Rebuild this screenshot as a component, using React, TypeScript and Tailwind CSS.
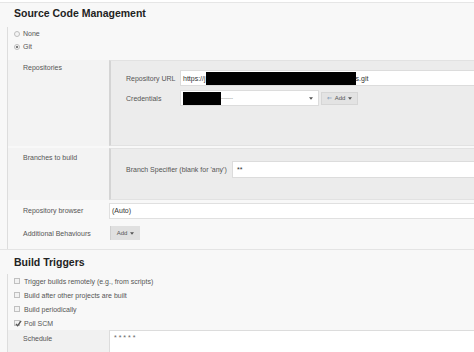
import React from "react";

function Radio({ checked }: { checked?: boolean }) {
  return (
    <span className="flex h-[6px] w-[6px] shrink-0 items-center justify-center rounded-full border border-[#bdbdbd] bg-[#f4f4f4]">
      {checked && <span className="h-[2px] w-[2px] rounded-full bg-[#555]" />}
    </span>
  );
}

function Checkbox({ checked }: { checked?: boolean }) {
  return (
    <span className="relative flex h-[6px] w-[6px] shrink-0 items-center justify-center border border-[#c0c0c0] bg-[#f2f2f2]">
      {checked && (
        <svg viewBox="0 0 8 8" className="absolute -top-[1px] left-0 h-[7px] w-[7px]">
          <path d="M1 4.5 L3 6.5 L7 1" fill="none" stroke="#555" strokeWidth="1.4" />
        </svg>
      )}
    </span>
  );
}

function Caret() {
  return (
    <svg viewBox="0 0 6 4" className="h-[3px] w-[4px] shrink-0">
      <path d="M0 0 L6 0 L3 4 Z" fill="#555" />
    </svg>
  );
}

function Redacted({ w }: { w: number }) {
  return <span className="inline-block h-[13px] shrink-0 bg-black" style={{ width: w }} />;
}

export default function App() {
  return (
    <div className="h-[352px] w-[474px] overflow-hidden whitespace-nowrap bg-[#f8f8f8] font-['Liberation_Sans',Arial,sans-serif] text-[7px] leading-[9px] text-[#555]">
      <div className="h-[3px] border-b border-[#e6e6e6] bg-white" />
      <h2 className="pl-[14px] pt-[3px] text-[10.5px] font-bold leading-[14px] text-[#222]">
        Source Code Management
      </h2>

      <div className="ml-[7px] mt-[7px] border-l border-[#dddddd]">
        <div className="flex h-[13px] items-center gap-[3px] pl-[6px]">
          <Radio />
          <span>None</span>
        </div>
        <div className="flex h-[13px] items-center gap-[3px] pl-[6px]">
          <Radio checked />
          <span>Git</span>
        </div>

        {/* Repositories */}
        <div className="mt-[7px] flex h-[86px] bg-[#f3f3f3]">
          <div className="w-[101px] shrink-0 pl-[15px] pt-[3px]">Repositories</div>
          <div className="flex-1 border-y border-l-2 border-y-[#e2e2e2] border-l-[#d4d4d4] bg-[#ececec] pl-[15px] pt-[9px]">
            <div className="flex h-[16px] items-center">
              <span className="w-[54px] shrink-0">Repository URL</span>
              <div className="flex h-[16px] flex-1 items-center border-y border-l border-[#dcdcdc] bg-white pl-[2px] text-[#333]">
                <span>https://j</span>
                <Redacted w={150} />
                <span>s.git</span>
              </div>
            </div>
            <div className="mt-[4px] flex h-[16px] items-center">
              <span className="w-[54px] shrink-0">Credentials</span>
              <div className="flex h-[16px] w-[139px] shrink-0 items-center justify-between border border-[#dcdcdc] bg-white pl-[2px] pr-[5px]">
                <span className="flex items-center">
                  <Redacted w={38} />
                  <span className="text-[6px] text-[#777]">------</span>
                </span>
                <Caret />
              </div>
              <div className="ml-[2px] flex h-[13px] w-[37px] items-center justify-center gap-[3px] border border-[#d6d6d6] bg-[#e3e3e3] text-[6px]">
                <span className="text-[#6a8ab0]">⇐</span>
                <span>Add</span>
                <Caret />
              </div>
            </div>
          </div>
        </div>

        {/* Branches */}
        <div className="mt-[2px] flex h-[52px] bg-[#f3f3f3]">
          <div className="w-[101px] shrink-0 pl-[15px] pt-[5px]">Branches to build</div>
          <div className="flex flex-1 border-y border-l-2 border-y-[#e2e2e2] border-l-[#d4d4d4] bg-[#ececec] pl-[15px] pt-[12px]">
            <div className="flex h-[17px] flex-1 items-center">
              <span className="w-[106px] shrink-0">Branch Specifier (blank for 'any')</span>
              <div className="flex h-[17px] flex-1 items-center border-y border-l border-[#dcdcdc] bg-white pl-[4px] text-[#333]">
                **
              </div>
            </div>
          </div>
        </div>

        {/* Repository browser */}
        <div className="flex h-[21px] items-center">
          <div className="w-[101px] shrink-0 pl-[15px]">Repository browser</div>
          <div className="flex h-[16px] flex-1 items-center border-y border-l border-[#e0e0e0] bg-white pl-[2px] text-[#333]">
            (Auto)
          </div>
        </div>

        {/* Additional Behaviours */}
        <div className="flex h-[24px] items-center">
          <div className="w-[101px] shrink-0 pl-[15px]">Additional Behaviours</div>
          <div className="ml-[1px] flex h-[14px] w-[30px] items-center justify-center gap-[3px] border-l border-[#d0d0d0] bg-[#e0e0e0] text-[6px]">
            <span>Add</span>
            <Caret />
          </div>
        </div>
        <div className="h-[4px]" />
      </div>

      <div className="border-t border-[#e4e4e4]" />
      <h2 className="pl-[14px] pt-[5px] text-[10.5px] font-bold leading-[14px] text-[#222]">
        Build Triggers
      </h2>

      <div className="ml-[7px] mt-[5px] border-l border-[#dddddd]">
        <div className="flex h-[14px] items-center gap-[4px] pl-[6px]">
          <Checkbox />
          <span>Trigger builds remotely (e.g., from scripts)</span>
        </div>
        <div className="flex h-[14px] items-center gap-[4px] pl-[6px]">
          <Checkbox />
          <span>Build after other projects are built</span>
        </div>
        <div className="flex h-[14px] items-center gap-[4px] pl-[6px]">
          <Checkbox />
          <span>Build periodically</span>
        </div>
        <div className="flex h-[14px] items-center gap-[4px] pl-[6px]">
          <Checkbox checked />
          <span>Poll SCM</span>
        </div>
        <div className="flex h-[40px] bg-[#f1f1f1]">
          <div className="w-[101px] shrink-0 pl-[15px] pt-[4px]">Schedule</div>
          <div className="flex-1 border-y border-l border-[#dcdcdc] bg-white pl-[4px] pt-[2px] text-[#666]">
            * * * * *
          </div>
        </div>
      </div>
    </div>
  );
}
